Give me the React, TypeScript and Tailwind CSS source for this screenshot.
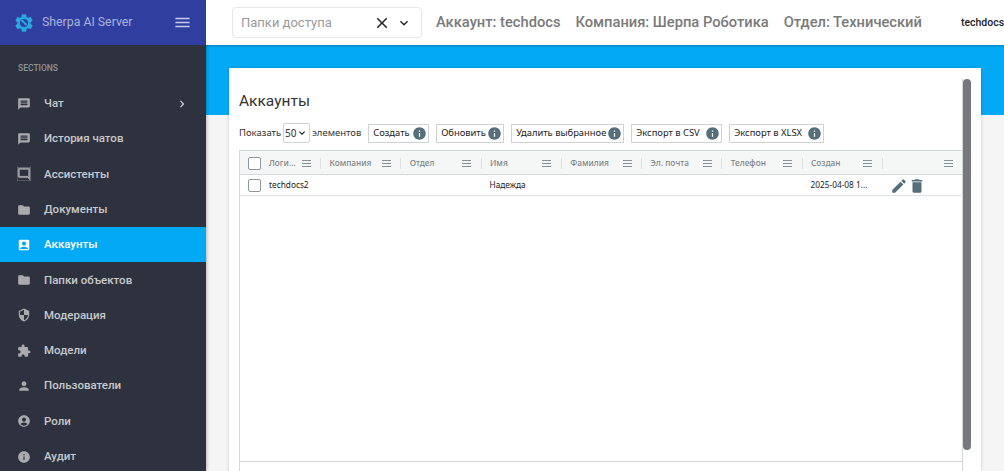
import React from "react";
import { MdMessage, MdFolder, MdAccountBox, MdSecurity, MdExtension, MdPerson, MdAccountCircle, MdInfo, MdEdit, MdDelete, MdClose, MdMenu, MdChevronRight, MdKeyboardArrowDown, MdSettings, MdChatBubbleOutline } from "react-icons/md";

const menu = [
  { label: "Чат", Icon: MdMessage, arrow: true },
  { label: "История чатов", Icon: MdMessage },
  { label: "Ассистенты", Icon: MdChatBubbleOutline, flip: true },
  { label: "Документы", Icon: MdFolder },
  { label: "Аккаунты", Icon: MdAccountBox, active: true },
  { label: "Папки объектов", Icon: MdFolder },
  { label: "Модерация", Icon: MdSecurity },
  { label: "Модели", Icon: MdExtension },
  { label: "Пользователи", Icon: MdPerson },
  { label: "Роли", Icon: MdAccountCircle },
  { label: "Аудит", Icon: MdInfo },
];

const cols = ["Компания", "Отдел", "Имя", "Фамилия", "Эл. почта", "Телефон", "Создан", ""];
const buttons = [
  { label: "Создать", w: "w-[61px]" },
  { label: "Обновить", w: "w-[68px]" },
  { label: "Удалить выбранное", w: "w-[113px]" },
  { label: "Экспорт в CSV", w: "w-[91px]" },
  { label: "Экспорт в XLSX", w: "w-[95px]" },
];

function Lines() {
  return (
    <span className="flex w-[9px] flex-col gap-[2px]">
      <span className="h-px bg-[#8a9196]" />
      <span className="h-px bg-[#8a9196]" />
      <span className="h-px bg-[#8a9196]" />
    </span>
  );
}

function Check() {
  return <span className="h-[13px] w-[13px] shrink-0 rounded-[2px] border border-[#8f979c] bg-white" />;
}

export default function App() {
  return (
    <div className="flex h-[471px] w-full overflow-hidden bg-[#f5f5f5] font-['Roboto',sans-serif]">
      <aside className="z-10 flex w-[206px] shrink-0 flex-col bg-[#2d323e] shadow-[1px_0_3px_rgba(0,0,0,0.25)]">
        <div className="flex h-[45px] shrink-0 items-center bg-[#303f9f] pl-[14px] pr-[14px]">
          <span className="relative flex h-[19px] w-[19px] items-center justify-center">
            <MdSettings className="h-[22px] w-[22px] shrink-0 text-[#29a9e0]" />
            <span className="absolute h-[8px] w-[8px] rounded-full bg-[#303f9f]" />
            <span className="absolute h-[7px] w-[2px] -rotate-45 bg-[#29a9e0]" />
          </span>
          <span className="ml-[9px] flex-1 text-[12.3px] text-[#a9b3dd]">Sherpa AI Server</span>
          <MdMenu className="h-[19px] w-[19px] text-[#c5cae9]" />
        </div>
        <div className="flex h-[41px] shrink-0 items-start pl-[18px] pt-[18px] text-[8.5px] leading-[11px] font-medium text-[#8f9297]">SECTIONS</div>
        <nav className="flex flex-col">
          {menu.map(({ label, Icon, arrow, active, flip }) => (
            <div
              key={label}
              className={`flex h-[35.3px] shrink-0 items-center pl-[17px] pr-[17px] text-[11.5px] font-medium ${
                active ? "bg-[#03a9f4] text-white" : "text-[#c8c9cc]"
              }`}
            >
              <Icon
                strokeWidth={flip ? 1 : 0}
                className={`h-[14px] w-[14px] shrink-0 ${flip ? "-scale-x-100" : ""} ${active ? "text-white" : "text-[#a9abaf]"}`}
              />
              <span className="ml-[13px] flex-1">{label}</span>
              {arrow && <MdChevronRight className="h-[14px] w-[14px] text-[#d5d6d8]" />}
            </div>
          ))}
        </nav>
      </aside>

      <div className="flex min-w-0 flex-1 flex-col">
        <header className="z-10 flex h-[45px] shrink-0 items-center whitespace-nowrap bg-white pl-[26px] shadow-[0_1px_2px_rgba(0,0,0,0.25)]">
          <div className="flex h-[31px] w-[190px] shrink-0 items-center rounded-[4px] border border-[#e6e6e6] pl-[8px] pr-[9px]">
            <span className="flex-1 text-[13px] text-[#9a9a9a]">Папки доступа</span>
            <MdClose className="h-[18px] w-[18px] text-[#222]" />
            <MdKeyboardArrowDown className="ml-[5px] h-[16px] w-[16px] text-[#222]" />
          </div>
          <span className="ml-[14px] text-[14.7px] font-medium text-[#7a7a7a]">Аккаунт: techdocs</span>
          <span className="ml-[15px] text-[14.7px] font-medium text-[#7a7a7a]">Компания: Шерпа Роботика</span>
          <span className="ml-[15px] text-[14.7px] font-medium text-[#7a7a7a]">Отдел: Технический</span>
          <span className="ml-[39px] text-[10.5px] font-medium text-[#222]">techdocs</span>
        </header>

        <div className="h-[70px] shrink-0 bg-[#03a9f4]" />

        <main className="-mt-[47px] ml-[23px] mr-[23px] flex min-h-0 flex-1 bg-white pl-[10px] pr-[10px] pt-[11px] shadow-[0_0_3px_rgba(0,0,0,0.2)] font-['Noto_Sans',sans-serif]">
          <div className="flex min-w-0 flex-1 flex-col">
            <h1 className="mt-[12px] font-['Roboto',sans-serif] text-[15.5px] leading-[20px] text-[#333]">Аккаунты</h1>
            <div className="mt-[12px] flex h-[20px] items-center whitespace-nowrap text-[9.5px] text-[#333]">
              <span>Показать</span>
              <span className="ml-[2px] flex h-[20px] w-[27px] items-center justify-center rounded-[2px] border border-[#cfd3d6] text-[10px]">
                50
                <MdKeyboardArrowDown className="h-[12px] w-[12px] text-[#111]" />
              </span>
              <span className="ml-[2px] w-[56px]">элементов</span>
              <div className="flex gap-[7px]">
                {buttons.map((b) => (
                  <span key={b.label} className={`flex h-[19px] ${b.w} items-center justify-between whitespace-nowrap border border-[#cfd3d6] pl-[4px] pr-[1px] text-[9.4px] text-[#222]`}>
                    {b.label}
                    <MdInfo className="h-[15px] w-[15px] shrink-0 text-[#546e7a]" />
                  </span>
                ))}
              </div>
            </div>

            <div className="mt-[7px] flex min-h-0 flex-1 flex-col border-l border-[#d4d8da]">
              <div className="flex h-[25px] shrink-0 items-center border-b border-t border-[#d4d8da] bg-[#f5f7f7] pt-[1px] text-[8.3px] font-medium text-[#7d8589]">
                <div className="flex h-full w-[80px] shrink-0 items-center pl-[8px] pr-[9px]">
                  <Check />
                  <span className="ml-[8px] flex-1">Логи...</span>
                  <Lines />
                </div>
                {cols.map((c, i) => (
                  <div key={i} className="flex h-full w-[80.25px] shrink-0 items-center pr-[9.5px]">
                    <span className="h-[11px] w-px bg-[#dcdfe1]" />
                    <span className="ml-[8.5px] flex-1">{c}</span>
                    <Lines />
                  </div>
                ))}
              </div>
              <div className="flex h-[21px] shrink-0 items-center border-b border-[#e0e3e5] pt-[1px] text-[8.3px] text-[#222]">
                <div className="flex w-[80px] shrink-0 items-center pl-[8px]">
                  <Check />
                  <span className="ml-[8px]">techdocs2</span>
                </div>
                <div className="w-[160.5px] shrink-0" />
                <div className="w-[80.25px] shrink-0 pl-[9px]">Надежда</div>
                <div className="w-[240.75px] shrink-0" />
                <div className="w-[80.25px] shrink-0 pl-[9px] whitespace-nowrap">2025-04-08 1...</div>
                <div className="flex w-[80.25px] items-center pl-[8px]">
                  <MdEdit className="h-[18px] w-[18px] text-[#546e7a]" />
                  <MdDelete className="h-[18px] w-[18px] text-[#546e7a]" />
                </div>
              </div>
              <div className="flex-1" />
              <div className="h-[10px] shrink-0 border-t border-[#d4d8da]" />
            </div>
          </div>
          <div className="flex w-[9px] shrink-0 flex-col border-l border-[#d4d8da]">
            <div className="h-[371px] w-[8px] rounded-[4px] bg-[#77777e]" />
          </div>
        </main>
      </div>
    </div>
  );
}
